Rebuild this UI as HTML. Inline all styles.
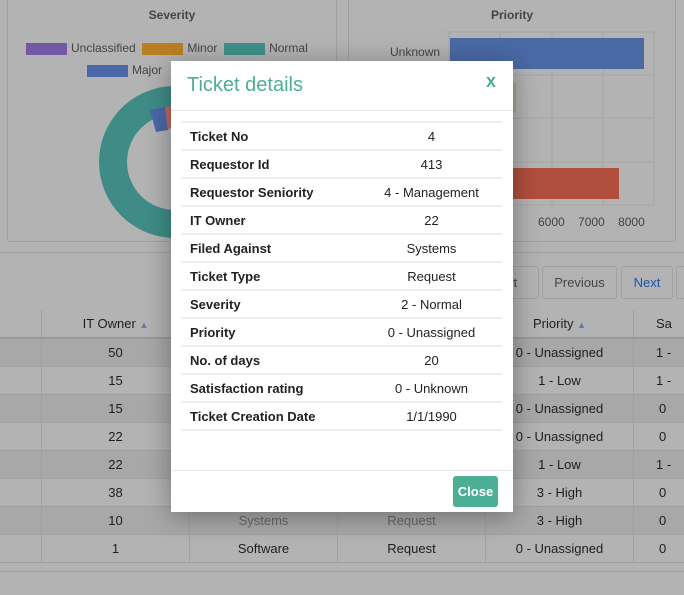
<!DOCTYPE html><html><head><style>
*{box-sizing:border-box}body{margin:0;width:684px;height:595px;overflow:hidden;background:#b3b3b3;font-family:"Liberation Sans",sans-serif;position:relative;color:#222}
.a{position:absolute}
.panel{border:1px solid #a0a0a0;border-radius:3px}
.ttl{font-size:12px;font-weight:bold;color:#444;text-align:center}
.lg{font-size:12px;color:#444}
.sw{display:inline-block;width:41px;height:12px;vertical-align:middle;margin-right:4px}
table.bg{position:absolute;left:-107px;top:310px;border-collapse:collapse;font-size:13px;color:#1e1e1e;table-layout:fixed;width:888px}
table.bg td{width:148px;height:28px;text-align:center;border:1px solid #a0a0a0;border-top:none;padding:0}
table.bg tr.h td{height:28px;border-bottom:2px solid #999}
table.bg tr:nth-child(even) td{background:#a8a8a8}
.btn{position:absolute;top:266px;height:33px;border:1px solid #a0a0a0;border-radius:3px;font-size:13px;color:#444;line-height:31px;text-align:center}
.modal{position:absolute;left:171px;top:61px;width:342px;height:451px;background:#fff;box-shadow:0 4px 25px rgba(0,0,0,.35)}
.mt td{height:28px;font-size:13px;border-top:2px solid #eee;color:#222}
</style></head><body>
<div class="a panel" style="left:7px;top:-5px;width:330px;height:247px"></div>
<div class="a ttl" style="left:7px;top:8px;width:330px">Severity</div>
<div class="a lg" style="left:26px;top:41px"><span class="sw" style="background:#7557a8"></span>Unclassified&nbsp;&nbsp;<span class="sw" style="background:#b98022"></span>Minor&nbsp;&nbsp;<span class="sw" style="background:#3f9089"></span>Normal</div>
<div class="a lg" style="left:87px;top:63px"><span class="sw" style="background:#4a68a8"></span>Major</div>
<svg class="a" style="left:90px;top:80px" width="100" height="160"><circle cx="85" cy="82" r="62" fill="none" stroke="#3f8c86" stroke-width="28"/><path d="M60 30 L75 27 L78 50 L66 52Z" fill="#4a68a8"/><path d="M75 27 L82 26 L83 45 L78 50Z" fill="#c06a60"/></svg>
<div class="a panel" style="left:348px;top:-5px;width:328px;height:247px"></div>
<div class="a ttl" style="left:348px;top:8px;width:328px">Priority</div>
<svg class="a" style="left:440px;top:30px" width="230" height="190"><g stroke="#a4a4a4" stroke-width="1"><line x1="9" y1="2" x2="9" y2="175"/><line x1="60" y1="2" x2="60" y2="175"/><line x1="112" y1="2" x2="112" y2="175"/><line x1="163" y1="2" x2="163" y2="175"/><line x1="214" y1="2" x2="214" y2="175"/><line x1="4" y1="2" x2="214" y2="2"/><line x1="9" y1="45" x2="214" y2="45"/><line x1="9" y1="88" x2="214" y2="88"/><line x1="9" y1="132" x2="214" y2="132"/><line x1="9" y1="175" x2="214" y2="175"/></g><rect x="10" y="8" width="194" height="31" fill="#4a6aa6"/><rect x="10" y="52" width="66" height="31" fill="#9cae88"/><rect x="10" y="138" width="169" height="31" fill="#b04f3e"/></svg>
<div class="a lg" style="left:390px;top:45px">Unknown</div>
<div class="a lg" style="left:538px;top:215px">6000&nbsp;&nbsp;&nbsp;&nbsp;7000&nbsp;&nbsp;&nbsp;&nbsp;8000</div>
<div class="a" style="left:0;top:252px;width:684px;border-top:1px solid #a0a0a0"></div>
<div class="btn" style="left:470px;width:69px">First</div>
<div class="btn" style="left:542px;width:75px">Previous</div>
<div class="btn" style="left:621px;width:52px;color:#1a56b0">Next</div>
<div class="btn" style="left:676px;width:30px"></div>
<table class="bg">
<tr class="h"><td></td><td>IT Owner <span style="font-size:9px;color:#5a7ab0">▲</span></td><td></td><td></td><td>Priority <span style="font-size:9px;color:#5a7ab0">▲</span></td><td style="text-align:left;padding-left:22px">Sa</td></tr>
<tr><td></td><td>50</td><td></td><td></td><td>0 - Unassigned</td><td style="text-align:left;padding-left:22px">1 -</td></tr>
<tr><td></td><td>15</td><td></td><td></td><td>1 - Low</td><td style="text-align:left;padding-left:22px">1 -</td></tr>
<tr><td></td><td>15</td><td></td><td></td><td>0 - Unassigned</td><td style="text-align:left;padding-left:25px">0</td></tr>
<tr><td></td><td>22</td><td></td><td></td><td>0 - Unassigned</td><td style="text-align:left;padding-left:25px">0</td></tr>
<tr><td></td><td>22</td><td></td><td></td><td>1 - Low</td><td style="text-align:left;padding-left:22px">1 -</td></tr>
<tr><td></td><td>38</td><td></td><td></td><td>3 - High</td><td style="text-align:left;padding-left:25px">0</td></tr>
<tr><td></td><td>10</td><td style="color:#666">Systems</td><td style="color:#666">Request</td><td>3 - High</td><td style="text-align:left;padding-left:25px">0</td></tr>
<tr><td></td><td>1</td><td>Software</td><td>Request</td><td>0 - Unassigned</td><td style="text-align:left;padding-left:25px">0</td></tr>
</table>
<div class="a" style="left:0;top:571px;width:684px;border-top:1px solid #a0a0a0"></div>
<div class="modal">
<div class="a" style="left:16px;top:13px;font-size:20px;color:#4caf95">Ticket details</div>
<div class="a" style="left:315px;top:10px;font-size:18px;font-weight:bold;color:#4caf95">x</div>
<div class="a" style="left:0;top:49px;width:342px;border-top:1px solid #e8e8e8"></div>
<table class="mt a" style="left:10px;top:60px;width:321px;border-collapse:collapse;border-bottom:2px solid #eee">
<tr><td style="padding-left:9px;font-weight:bold;width:180px">Ticket No</td><td style="text-align:center">4</td></tr>
<tr><td style="padding-left:9px;font-weight:bold">Requestor Id</td><td style="text-align:center">413</td></tr>
<tr><td style="padding-left:9px;font-weight:bold">Requestor Seniority</td><td style="text-align:center">4 - Management</td></tr>
<tr><td style="padding-left:9px;font-weight:bold">IT Owner</td><td style="text-align:center">22</td></tr>
<tr><td style="padding-left:9px;font-weight:bold">Filed Against</td><td style="text-align:center">Systems</td></tr>
<tr><td style="padding-left:9px;font-weight:bold">Ticket Type</td><td style="text-align:center">Request</td></tr>
<tr><td style="padding-left:9px;font-weight:bold">Severity</td><td style="text-align:center">2 - Normal</td></tr>
<tr><td style="padding-left:9px;font-weight:bold">Priority</td><td style="text-align:center">0 - Unassigned</td></tr>
<tr><td style="padding-left:9px;font-weight:bold">No. of days</td><td style="text-align:center">20</td></tr>
<tr><td style="padding-left:9px;font-weight:bold">Satisfaction rating</td><td style="text-align:center">0 - Unknown</td></tr>
<tr><td style="padding-left:9px;font-weight:bold">Ticket Creation Date</td><td style="text-align:center">1/1/1990</td></tr>
</table>
<div class="a" style="left:0;top:409px;width:342px;border-top:1px solid #e8e8e8"></div>
<div class="a" style="left:282px;top:415px;width:45px;height:31px;background:#4caf95;border-radius:3px;color:#fff;font-size:13px;font-weight:bold;text-align:center;line-height:31px">Close</div>
</div>
</body></html>
